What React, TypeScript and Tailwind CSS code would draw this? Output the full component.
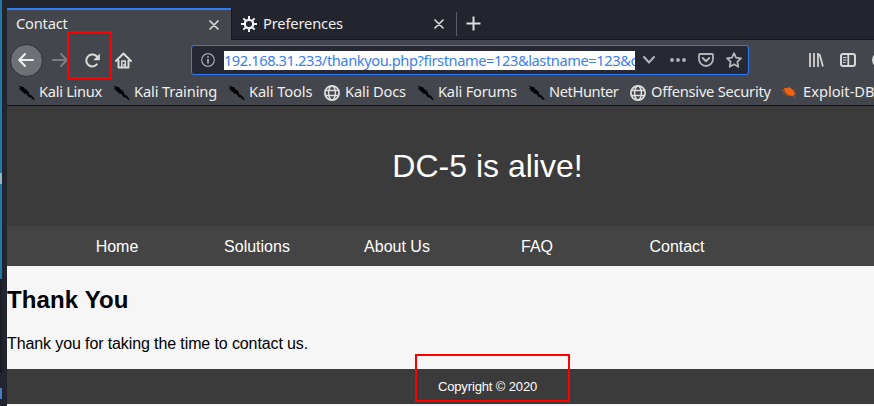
import React from "react";

const ui = "font-['Noto_Sans',sans-serif]";

function Dragon() {
  return (
    <svg width="18" height="16" viewBox="0 0 18 16" className="-ml-px shrink-0" fill="#050505">
      <path d="M1 0l2 1.500 1-.5 1 1 2 0 1 2 2 1 2 2.500.3 2 1.700.5 2 2 2 3-2.500-.5-1.500-2-2.500-.5-2-3-2.500-.5-1.500-2-2-.5.500-1-2.500-2 2 .300z" />
    </svg>
  );
}

function Globe() {
  return (
    <svg width="16" height="16" viewBox="0 0 16 16" className="shrink-0" fill="none" stroke="#dedede" strokeWidth="1.5">
      <circle cx="8" cy="8" r="7.1" strokeWidth="1.8" />
      <ellipse cx="8" cy="8" rx="3.4" ry="7" />
      <path d="M1.5 5.5h13M1.5 10.5h13" />
    </svg>
  );
}

function Bug() {
  return (
    <svg width="15" height="13" viewBox="0 0 15 13" className="shrink-0">
      <path d="M2 2l3 0 2-1 4 3 2 3-1 2.500-2 .5-4-1-3-3z" fill="#ee6410" />
      <path d="M0 4l3 1M1 7l2-.5M3 9l2-1M6 10.500l1-1.500M10 9l3.500 3M12 7l2 1M12 5l1-1" stroke="#b85f33" strokeWidth=".8" fill="none" />
    </svg>
  );
}

function Close() {
  return (
    <svg width="10" height="10" viewBox="0 0 10 10" stroke="#d8d8d8" strokeWidth="1.7" strokeLinecap="round">
      <path d="M1 1l8 8M9 1L1 9" />
    </svg>
  );
}

function Gear() {
  return (
    <svg width="16" height="16" viewBox="0 0 16 16" fill="none" stroke="#f2f2f2">
      <circle cx="8" cy="8" r="4.2" strokeWidth="2.3" />
      <path
        d="M8 0v3.500M8 12.500V16M0 8h3.500M12.500 8H16M2.350 2.350l2.300 2.300M11.350 11.350l2.300 2.300M2.350 13.650l2.300-2.300M11.350 4.650l2.300-2.300"
        strokeWidth="2"
      />
    </svg>
  );
}

const bookmarks = [
  { label: "Kali Linux", icon: <Dragon />, cell: "w-[95px]", track: "tracking-[-0.3px]" },
  { label: "Kali Training", icon: <Dragon />, cell: "w-[115px]", track: "tracking-[-0.12px]" },
  { label: "Kali Tools", icon: <Dragon />, cell: "w-[96px]", track: "tracking-[-0.1px]" },
  { label: "Kali Docs", icon: <Globe />, cell: "w-[93px]", track: "tracking-[-0.15px]" },
  { label: "Kali Forums", icon: <Dragon />, cell: "w-[111px]", track: "tracking-[-0.2px]" },
  { label: "NetHunter", icon: <Dragon />, cell: "w-[102px]", track: "tracking-[-0.42px]" },
  { label: "Offensive Security", icon: <Globe />, cell: "w-[152px]", track: "tracking-[-0.25px]" },
  { label: "Exploit-DB", icon: <Bug />, cell: "w-[100px]", track: "tracking-normal" },
];

function Tabs() {
  return (
    <div className="flex h-10 border-b border-[#16181e] bg-[#23252e] pt-2">
      <div className="-mb-px flex h-8 w-[224px] items-center justify-between border-t-2 border-[#2f7cf6] bg-[#43464d] pl-[9px] pr-3">
        <span className="mb-[4px] text-[14.67px] leading-5 tracking-[-0.2px] text-[#eeeeec]">Contact</span>
        <Close />
      </div>
      <div className="flex w-[225px] items-center border-l border-[#16181e] pl-[9px] pr-3 pt-px">
        <Gear />
        <span className="mb-[2px] ml-[6px] text-[14.67px] leading-5 tracking-[-0.15px] text-[#eeeeec]">Preferences</span>
        <span className="ml-auto">
          <Close />
        </span>
      </div>
      <div className="mt-1 h-6 w-px bg-[#5b5d64]" />
      <svg className="ml-[9px] mt-2" width="15" height="15" viewBox="0 0 15 15" stroke="#dddddd" strokeWidth="2">
        <path d="M7.500 .5v14M.5 7.500h14" />
      </svg>
    </div>
  );
}

function Toolbar() {
  return (
    <div className="flex h-10 items-center bg-[#43464d] pl-1">
      <div className="-ml-px flex h-[33px] w-[33px] items-center justify-center rounded-full border border-[#2f3137] bg-[#6e7076]">
        <svg width="16" height="14" viewBox="0 0 16 14" fill="none" stroke="#eeeeec" strokeWidth="2" strokeLinecap="round" strokeLinejoin="round">
          <path d="M15 7H1.500M7 1L1.200 7 7 13" />
        </svg>
      </div>
      <svg className="ml-[9px]" width="16" height="14" viewBox="0 0 16 14" fill="none" stroke="#7c7e82" strokeWidth="2" strokeLinecap="round" strokeLinejoin="round">
        <path d="M1 7h13.500M9 1l5.800 6L9 13" />
      </svg>
      <svg className="ml-[17px]" width="15" height="15" viewBox="0 0 15 15" fill="none" stroke="#dcdcda" strokeWidth="2">
        <path d="M11.800 11.400A6 6 0 1 1 12.400 4.300" strokeLinecap="round" />
        <path d="M14.800 .5v6.700H8.300z" fill="#dcdcda" stroke="none" />
      </svg>
      <svg className="ml-[15px]" width="17" height="17" viewBox="0 0 17 17" fill="none" stroke="#dcdcda" strokeWidth="2" strokeLinejoin="round">
        <path d="M1 9l7.500-7.500L16 9" strokeLinecap="round" />
        <path d="M3.500 8v7.500h10V8" />
        <path d="M6.800 15V9h3.500v6" strokeWidth="1.500" />
        <path d="M9 12v2" strokeWidth="1.400" />
      </svg>
      <div className="ml-[59px] flex h-[30px] w-[559px] items-center rounded-[3px] border border-[#2f7cf6] bg-[#262833] pl-[9px]">
        <svg width="14" height="14" viewBox="0 0 14 14" fill="none" stroke="#a5a6aa" strokeWidth="1.200">
          <circle cx="7" cy="7" r="6.300" />
          <path d="M7 6v4.500M7 3.200v1.600" strokeWidth="1.800" />
        </svg>
        <div className="ml-[9px] h-[19px] w-[411px] overflow-hidden whitespace-nowrap bg-white text-[14.67px] leading-[19px] tracking-[-0.43px] text-[#3a80ee]">
          192.168.31.233/thankyou.php?firstname=123&amp;lastname=123&amp;c
        </div>
        <svg className="ml-2" width="12" height="8" viewBox="0 0 12 8" fill="none" stroke="#b4b5b8" strokeWidth="2" strokeLinecap="round">
          <path d="M1 1l5 5.500L11 1" />
        </svg>
        <svg className="ml-[15px]" width="16" height="4" viewBox="0 0 16 4" fill="#b4b5b8">
          <circle cx="2" cy="2" r="1.900" />
          <circle cx="8" cy="2" r="1.900" />
          <circle cx="14" cy="2" r="1.900" />
        </svg>
        <svg className="ml-3" width="16" height="14" viewBox="0 0 16 14" fill="none" stroke="#b4b5b8" strokeWidth="1.800" strokeLinecap="round" strokeLinejoin="round">
          <path d="M2 1h12q1 0 1 1v4a7 7 0 0 1-14 0V2q0-1 1-1z" />
          <path d="M4.700 5L8 8.200 11.300 5" strokeWidth="2" />
        </svg>
        <svg className="ml-3" width="16" height="16" viewBox="0 0 16 16" fill="none" stroke="#b4b5b8" strokeWidth="1.800" strokeLinejoin="round">
          <path d="M8 1.200l2 4.500 5 .6-3.600 3.400.9 5.100L8 12.300l-4.300 2.500.9-5.100L1 6.300l5-.6z" />
        </svg>
      </div>
      <svg className="ml-[60px]" width="15" height="14" viewBox="0 0 15 14" stroke="#d8d8d8" strokeWidth="2">
        <path d="M1 0v14M5 0v14M9 0v14M10.500 1l3.500 12.500" strokeWidth="1.700" />
      </svg>
      <svg className="ml-4" width="16" height="14" viewBox="0 0 16 14" fill="none" stroke="#d8d8d8">
        <rect x="1" y="1" width="14" height="12" rx="2" strokeWidth="2" />
        <path d="M8.300 1v12" strokeWidth="1.800" />
        <path d="M3 4.500h3.500M3 7h3.500M3 9.500h2.500" strokeWidth="1" />
      </svg>
      <div className="ml-4 h-4 w-[2px] shrink-0 overflow-hidden">
        <div className="h-4 w-4 rounded-full border-2 border-[#d8d8d8]" />
      </div>
    </div>
  );
}

function Bookmarks() {
  return (
    <div className="flex h-[26px] items-center overflow-hidden border-b border-[#0d0d0f] bg-[#43464d] pl-[11px]">
      {bookmarks.map((b) => (
        <div key={b.label} className={`flex shrink-0 items-center ${b.cell}`}>
          <span className="flex w-[21px] shrink-0">{b.icon}</span>
          <span className={`mb-[3px] whitespace-nowrap text-[14.67px] leading-5 text-[#eeeeec] ${b.track}`}>{b.label}</span>
        </div>
      ))}
    </div>
  );
}

export default function App() {
  return (
    <div className="relative flex h-[406px] w-[874px] overflow-hidden bg-[#23252e]">
      <div className="flex w-[7px] shrink-0">
        <div className="flex w-[2px] flex-col">
          <div className="h-[173px] bg-[#2478a5]" />
          <div className="h-[11px] bg-[#8eb6c4]" />
          <div className="h-[95px] bg-[#2478a5]" />
          <div className="h-[93px] border-b border-t border-[#090a0d] bg-[#1b1d25]" />
          <div className="mt-[16px] h-[11px] bg-[#477fbe]" />
        </div>
      </div>
      <main className="flex w-[867px] flex-col">
        <div className={ui}>
          <Tabs />
          <Toolbar />
          <Bookmarks />
        </div>
        <div className="flex flex-1 flex-col bg-[#f6f6f6] font-['Liberation_Sans',Arial,sans-serif]">
          <header className="flex h-[120px] items-center justify-center bg-[#3b3b3b] pr-0 pl-[94px]">
            <h1 className="text-[32px] leading-9 text-white">DC-5 is alive!</h1>
          </header>
          <nav className="flex h-10 items-center bg-[#444444] pl-10 pt-[2px] text-center text-base text-white">
            {["Home", "Solutions", "About Us", "FAQ", "Contact"].map((item) => (
              <a key={item} className="w-[140px]">{item}</a>
            ))}
          </nav>
          <section className="h-[103px] pt-[19px] text-black">
            <h2 className="text-2xl leading-[30px] font-bold tracking-[0.12px]">Thank You</h2>
            <p className="mt-[17px] text-base leading-6 tracking-[-0.11px]">Thank you for taking the time to contact us.</p>
          </section>
          <footer className="flex h-[35px] items-center justify-center bg-[#3b3b3b] pl-[94px] text-[13px] tracking-[-0.14px] text-white">
            Copyright © 2020
          </footer>
        </div>
      </main>
      <div className="absolute left-[67px] top-[31px] h-12 w-[45px] border-2 border-[#ff0000]" />
      <div className="absolute left-[415px] top-[354px] h-12 w-[155px] border-2 border-[#ff0000]" />
    </div>
  );
}
